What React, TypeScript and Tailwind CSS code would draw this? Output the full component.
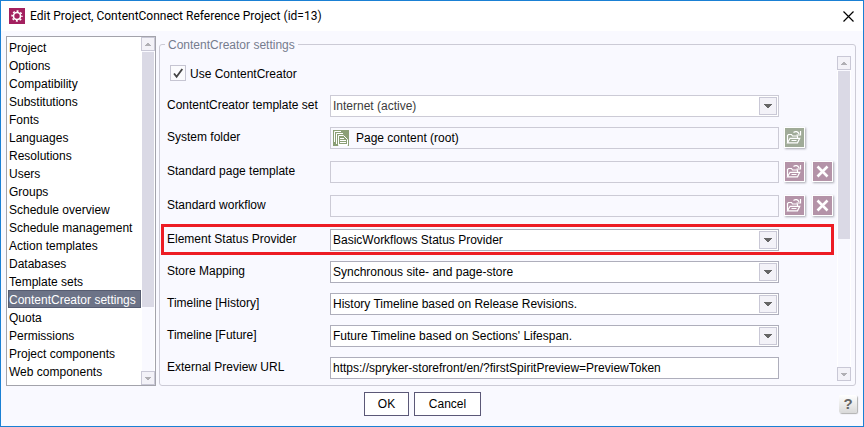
import React from "react";

const sections = [
  "Project",
  "Options",
  "Compatibility",
  "Substitutions",
  "Fonts",
  "Languages",
  "Resolutions",
  "Users",
  "Groups",
  "Schedule overview",
  "Schedule management",
  "Action templates",
  "Databases",
  "Template sets",
  "ContentCreator settings",
  "Quota",
  "Permissions",
  "Project components",
  "Web components",
];

const active = "ContentCreator settings";

function Caret() {
  return (
    <svg viewBox="0 0 8 4" className="h-1 w-2" fill="currentColor" shapeRendering="crispEdges" aria-hidden="true">
      <path d="M0 0h8v1H7v1H6v1H5v1H3V3H2V2H1V1H0z" />
    </svg>
  );
}

function StepCaret({ up = false }: { up?: boolean }) {
  return (
    <svg viewBox="0 0 6 3" className="h-[3px] w-1.5 shrink-0" fill="currentColor" shapeRendering="crispEdges" aria-hidden="true">
      {up ? <path d="M2 0h2v1h1v1h1v1H0V2h1V1h1z" /> : <path d="M0 0h6v1H5v1H4v1H2V2H1V1H0z" />}
    </svg>
  );
}

function ScrollBar({ thumb }: { thumb: string }) {
  const step =
    "flex h-3.5 w-3.5 shrink-0 items-center justify-center border border-[#c9c8d6] bg-[#f3f2f8] text-[#b0afb4]";
  return (
    <div className="flex w-3.5 shrink-0 flex-col">
      <button type="button" aria-label="Scroll up" className={step}>
        <StepCaret up />
      </button>
      <div className="flex-1 border-x border-white bg-[#f9f9ff] pt-px">
        <div className={`bg-[#dad9e5] ${thumb}`} />
      </div>
      <button type="button" aria-label="Scroll down" className={step}>
        <StepCaret />
      </button>
    </div>
  );
}

function OpenIcon() {
  return (
    <svg viewBox="0 0 19 19" className="size-full" fill="none" stroke="#fff" strokeWidth="1.2" aria-hidden="true">
      <path d="M2.5 14.5V7.5l1-1h3l1 1.5h5v2" />
      <path d="M2.5 14.8l2.6-4.5h9.6l-2.2 4.5z" />
      <path d="M6.5 12.5h5" strokeWidth="1" />
      <path d="M8.5 4.5c2-1.6 4.4-1 5.6 1.4" />
      <path d="M15.5 3v4h-4" />
    </svg>
  );
}

function CrossIcon() {
  return (
    <svg viewBox="0 0 19 19" className="size-full" fill="none" stroke="#fff" strokeWidth="2.6" aria-hidden="true">
      <path d="M4.5 4.5l10 10M14.5 4.5l-10 10" />
    </svg>
  );
}

function PagesIcon() {
  return (
    <svg viewBox="0 0 16 16" className="size-4 shrink-0" aria-hidden="true">
      <rect width="16" height="16" fill="#8b9f76" />
      <path d="M1.5 12V1.5H8M3.5 14V3.5H10" fill="none" stroke="#fff" />
      <path d="M5.5 15.5v-10h5l4 4v6z" fill="#8b9f76" stroke="#fff" />
      <path d="M7 8.5h4M7 10.5h6M7 12.5h6M6 14.5h8" stroke="#fff" />
    </svg>
  );
}

function ToolButton({ label, tone, children }: { label: string; tone: string; children: React.ReactNode }) {
  return (
    <button
      type="button"
      aria-label={label}
      className={`size-[21px] shrink-0 border border-white shadow-[1px_1px_2px_#a8a8b0] ${tone}`}
    >
      {children}
    </button>
  );
}

function Row({
  id,
  label,
  tall = false,
  highlight = false,
  tools,
  children,
}: {
  id: string;
  label: string;
  tall?: boolean;
  highlight?: boolean;
  tools?: React.ReactNode;
  children: React.ReactNode;
}) {
  return (
    <div className={`relative flex items-start ${tall ? "h-6" : "h-[22px]"}`}>
      <label htmlFor={id} className="w-[163px] shrink-0 leading-5 whitespace-nowrap">
        {label}
      </label>
      <div className="min-w-0 flex-1">{children}</div>
      <div className="flex w-[54px] shrink-0 gap-[7px] pl-[5px]">{tools}</div>
      {highlight && (
        <div className="pointer-events-none absolute -top-[5px] -right-px -bottom-1 -left-1.5 border-3 border-[#ed1c24]" />
      )}
    </div>
  );
}

function Choice({ id, value, disabled = false }: { id: string; value: string; disabled?: boolean }) {
  return (
    <div className="relative">
      <select
        id={id}
        disabled={disabled}
        className={`block h-[22px] w-full appearance-none border bg-white pr-6 pl-0.5 opacity-100 ${
          disabled ? "border-[#cccbd6] text-[#3c3c3c]" : "border-[#aeaebb] text-black"
        }`}
      >
        <option>{value}</option>
      </select>
      <span className="pointer-events-none absolute top-0.5 right-0.5 flex size-[18px] items-center justify-center border border-[#c9c8d6] bg-[#f3f2f8] text-[#666]">
        <Caret />
      </span>
    </div>
  );
}

const readOnlyBox = "block h-[22px] w-full border border-[#cccbd6] bg-[#f9f9ff]";
const mauve = "bg-[#b493a8]";

export default function App() {
  return (
    <div className="flex min-h-screen flex-col border border-[#1a80d4] bg-[#f9f9ff] font-['Liberation_Sans',Arial,sans-serif] text-[12px] text-black">
      <header className="flex h-[30px] shrink-0 items-center bg-white pr-[9px] pl-2">
        <svg viewBox="0 0 16 16" className="size-4" aria-hidden="true">
          <rect width="16" height="16" fill="#a3205f" />
          <circle cx="8" cy="8" r="3.5" fill="none" stroke="#fff" strokeWidth="1.6" />
          <circle cx="8" cy="8" r="4.9" fill="none" stroke="#fff" strokeWidth="1.6" strokeDasharray="1.924 1.924" strokeDashoffset="0.96" />
        </svg>
        <h1 className="ml-[5px] flex-1 font-[Roboto,sans-serif] text-[12px]">
          Edit Project, ContentConnect Reference Project (id=13)
        </h1>
        <button type="button" aria-label="Close">
          <svg viewBox="0 0 11 11" className="size-[11px]" stroke="#000" strokeWidth="1.2" aria-hidden="true">
            <path d="M.5 .5l10 10M10.5 .5l-10 10" />
          </svg>
        </button>
      </header>

      <main className="flex flex-1 gap-[3px] pt-[5px] pr-[7px] pl-[5px]">
        <nav className="flex w-[150px] shrink-0 border border-[#a3a3ab] bg-white">
          <ul className="flex-1 pt-px pl-px">
            {sections.map((name) => (
              <li key={name}>
                <button
                  type="button"
                  aria-current={name === active ? "page" : undefined}
                  className={`block h-[18px] w-full border text-left leading-[18px] whitespace-nowrap ${
                    name === active ? "border-[#565c70] bg-[#6c7387] text-white" : "border-transparent"
                  }`}
                >
                  {name}
                </button>
              </li>
            ))}
          </ul>
          <ScrollBar thumb="h-[255px]" />
        </nav>

        <fieldset className="flex min-w-0 flex-1 rounded-[3px] border border-[#cccbd6] pt-[3px] pr-1 pb-1 pl-[7px]">
          <legend className="-ml-0.5 px-[3px] pt-px leading-4 text-[#767c8e]">ContentCreator settings</legend>
          <div className="flex flex-1 gap-1">
            <form className="flex min-w-0 flex-1 flex-col gap-2.5 pt-[9px]">
              <div className="flex h-5 items-start gap-1 pl-[3px]">
                <span className="relative size-4">
                  <input
                    id="use-cc"
                    type="checkbox"
                    defaultChecked
                    className="peer block size-4 appearance-none border border-[#c6c5d2] bg-[#fbfbfd]"
                  />
                  <svg
                    viewBox="0 0 16 16"
                    className="pointer-events-none absolute inset-0 hidden size-4 peer-checked:block"
                    fill="none"
                    stroke="#444"
                    strokeWidth="1.8"
                    aria-hidden="true"
                  >
                    <path d="M4 8.5l2.6 3.3L12.3 4" />
                  </svg>
                </span>
                <label htmlFor="use-cc" className="leading-[18px]">
                  Use ContentCreator
                </label>
              </div>
              <Row id="template-set" label="ContentCreator template set">
                <Choice id="template-set" value="Internet (active)" disabled />
              </Row>
              <Row
                id="system-folder"
                label="System folder"
                tall
                tools={
                  <ToolButton label="Choose system folder" tone="bg-[#a0ab98]">
                    <OpenIcon />
                  </ToolButton>
                }
              >
                <div className="flex h-[22px] items-center gap-[7px] border border-[#cccbd6] pl-0.5">
                  <PagesIcon />
                  <input id="system-folder" readOnly defaultValue="Page content (root)" className="min-w-0 flex-1 bg-transparent" />
                </div>
              </Row>
              <Row
                id="page-template"
                label="Standard page template"
                tall
                tools={
                  <>
                    <ToolButton label="Choose page template" tone={mauve}>
                      <OpenIcon />
                    </ToolButton>
                    <ToolButton label="Clear page template" tone={mauve}>
                      <CrossIcon />
                    </ToolButton>
                  </>
                }
              >
                <input id="page-template" readOnly className={readOnlyBox} />
              </Row>
              <Row
                id="workflow"
                label="Standard workflow"
                tall
                tools={
                  <>
                    <ToolButton label="Choose workflow" tone={mauve}>
                      <OpenIcon />
                    </ToolButton>
                    <ToolButton label="Clear workflow" tone={mauve}>
                      <CrossIcon />
                    </ToolButton>
                  </>
                }
              >
                <input id="workflow" readOnly className={readOnlyBox} />
              </Row>
              <Row id="status-provider" label="Element Status Provider" highlight>
                <Choice id="status-provider" value="BasicWorkflows Status Provider" />
              </Row>
              <Row id="store-mapping" label="Store Mapping">
                <Choice id="store-mapping" value="Synchronous site- and page-store" />
              </Row>
              <Row id="history" label="Timeline [History]">
                <Choice id="history" value="History Timeline based on Release Revisions." />
              </Row>
              <Row id="future" label="Timeline [Future]">
                <Choice id="future" value="Future Timeline based on Sections' Lifespan." />
              </Row>
              <Row id="preview-url" label="External Preview URL">
                <input
                  id="preview-url"
                  defaultValue="https://spryker-storefront/en/?firstSpiritPreview=PreviewToken"
                  className="block h-[22px] w-full border border-[#aeaebb] bg-white pl-0.5"
                />
              </Row>
            </form>
            <ScrollBar thumb="h-[168px]" />
          </div>
        </fieldset>
      </main>

      <footer className="flex items-center pt-[6px] pr-1.5 pb-[10px] pl-[5px]">
        <div className="flex flex-1 justify-center gap-[5px]">
          <button type="button" className="h-6 w-[45px] border border-[#5b5877] bg-white">
            OK
          </button>
          <button type="button" className="h-6 w-[67px] border border-[#5b5877] bg-white">
            Cancel
          </button>
        </div>
        <button
          type="button"
          aria-label="Help"
          className="size-[18px] rounded-[2px] bg-linear-to-b from-white to-[#d9d9d9] font-['Liberation_Sans',sans-serif] text-[15px] leading-[18px] font-bold text-[#666] shadow-[1px_1px_1px_#b0b0b0]"
        >
          ?
        </button>
      </footer>
    </div>
  );
}
